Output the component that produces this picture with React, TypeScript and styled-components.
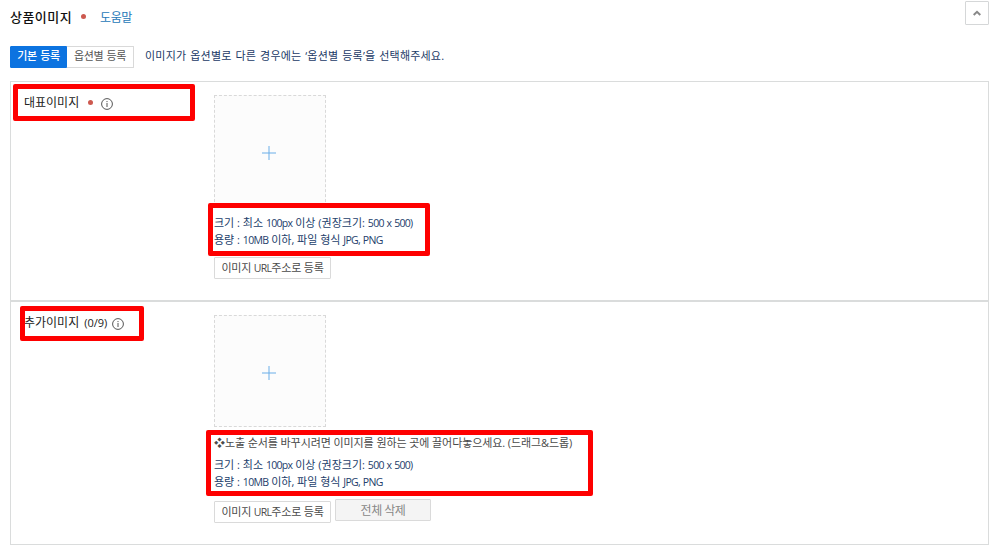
import styled, { createGlobalStyle } from 'styled-components';

const GlobalStyle = createGlobalStyle`
  * {
    box-sizing: border-box;
  }

  body {
    margin: 0;
    background: #fff;
    font-family: 'Open Sans', 'Noto Sans CJK KR', sans-serif;
    font-size: 11px;
    color: #333;
  }
`;

const Page = styled.div`
  display: flex;
  flex-direction: column;
  width: 1001px;
  height: 551px;
  padding: 1px 12px 0 10px;
  overflow: hidden;
`;

const Header = styled.header`
  display: flex;
  align-items: flex-start;
  height: 45px;
`;

const Title = styled.h1`
  margin: 6px 0 0;
  font-size: 13px;
  font-weight: 500;
  line-height: 20px;
  letter-spacing: 0.45px;
  color: #111;
`;

const Dot = styled.span<{ size: number }>`
  width: ${props => props.size}px;
  height: ${props => props.size}px;
  border-radius: 50%;
  background: #cd594f;
  flex-shrink: 0;
`;

const TitleDot = styled(Dot)`
  margin: 13px 14px 0 9px;
`;

const HelpLink = styled.a`
  margin-top: 7px;
  font-size: 12px;
  line-height: 20px;
  letter-spacing: -0.4px;
  color: #2678b8;
`;

const CollapseButton = styled.button`
  display: flex;
  align-items: center;
  justify-content: center;
  width: 24px;
  height: 24px;
  margin-left: auto;
  padding: 0;
  border: 1px solid #d5d7d8;
  border-radius: 1px;
  background: #fff;
`;

const Toolbar = styled.div`
  display: flex;
  align-items: center;
  height: 22px;
  margin-bottom: 13px;
`;

const Toggle = styled.button<{ active?: boolean; width: number }>`
  width: ${props => props.width}px;
  height: 22px;
  padding: 0 0 2px;
  border: 1px solid ${props => (props.active ? '#0c73e0' : '#d9d9d9')};
  border-left-width: ${props => (props.active ? 1 : 0)}px;
  border-radius: ${props => (props.active ? '1px 0 0 1px' : '0 1px 1px 0')};
  background: ${props => (props.active ? '#0c73e0' : '#fff')};
  color: ${props => (props.active ? '#fff' : '#555')};
  font-family: inherit;
  font-size: 11px;
  font-weight: ${props => (props.active ? 500 : 400)};
  line-height: 18px;
  letter-spacing: -0.4px;
  word-spacing: 1px;
  white-space: nowrap;
`;

const ToolbarNote = styled.p`
  margin: 0 0 2px 11px;
  font-size: 11px;
  line-height: 18px;
  letter-spacing: 0.2px;
  word-spacing: 0.9px;
  color: #1b3a66;
  white-space: nowrap;
`;

const Section = styled.section<{ height: number }>`
  display: flex;
  height: ${props => props.height}px;
  padding: 13px 0 0 13px;
  border: 1px solid #dadcdc;
`;

const Label = styled.div`
  display: flex;
  align-items: flex-start;
  width: 190px;
  font-size: 12px;
  line-height: 16px;
  color: #222;
  white-space: pre;
`;

const LabelDot = styled(Dot)`
  margin: 5px 8px 0 9px;
`;

const InfoSvg = styled.svg`
  margin-top: 3px;
  flex-shrink: 0;
`;

const CountInfo = styled.span`
  margin: 0 5px 0 5px;
  font-size: 11px;
`;

const Content = styled.div`
  display: flex;
  flex-direction: column;
  align-items: flex-start;
`;

const DropZone = styled.div`
  display: flex;
  align-items: center;
  justify-content: center;
  width: 112px;
  height: 112px;
  padding: 3px 2px 0 0;
  border: 1px dashed #d9d9d9;
  background: #fcfcfc;
`;

const Guide = styled.p<{ gap: number }>`
  margin: ${props => props.gap}px 0 0;
  font-size: 11px;
  line-height: 17px;
  color: #23406b;
  white-space: nowrap;
`;

const Latin = styled.span`
  font-size: 10.5px;
  line-height: 1;
  letter-spacing: -0.7px;
  word-spacing: 0.8px;
`;

const SortNote = styled.p`
  margin: 7px 0 0;
  font-size: 11px;
  line-height: 17px;
  letter-spacing: -0.09px;
  color: #4a4a4a;
  white-space: nowrap;
`;

const Actions = styled.div<{ gap: number }>`
  display: flex;
  align-items: flex-end;
  gap: 4px;
  margin-top: ${props => props.gap}px;
`;

const ActionButton = styled.button<{ width: number; muted?: boolean }>`
  width: ${props => props.width}px;
  height: 22px;
  margin-bottom: ${props => (props.muted ? 2 : 0)}px;
  padding: ${props => (props.muted ? '2px 0 0' : '0 0 1px')};
  border: 1px solid #dadada;
  border-radius: 1px;
  background: ${props => (props.muted ? '#f4f4f4' : '#fff')};
  color: ${props => (props.muted ? '#888' : '#4a4a4a')};
  font-family: inherit;
  font-size: ${props => (props.muted ? 12 : 11)}px;
  line-height: 18px;
  letter-spacing: ${props => (props.muted ? -0.5 : -0.2)}px;
  white-space: nowrap;
`;

// Red marker frames lie over the form
const Marker = styled.div<{ x: number; y: number; w: number; h: number }>`
  position: absolute;
  left: ${props => props.x}px;
  top: ${props => props.y}px;
  width: ${props => props.w}px;
  height: ${props => props.h}px;
  border: 5px solid #fe0000;
  border-radius: 2px;
  pointer-events: none;
`;

const markers = [
  { x: 13, y: 84, w: 182, h: 37 },
  { x: 208, y: 203, w: 222, h: 53 },
  { x: 20, y: 306, w: 124, h: 35 },
  { x: 206, y: 430, w: 387, h: 66 },
];

const InfoIcon = () => (
  <InfoSvg width="12" height="12" viewBox="0 0 12 12" fill="none" stroke="#555">
    <circle cx="6" cy="6" r="5.4" />
    <path d="M6 5v4" />
    <path d="M6 3v1.1" />
  </InfoSvg>
);

const PlusSvg = styled.svg`
  fill: none;
  stroke: #6aaee8;
  stroke-width: 1px;
`;

const PlusIcon = () => (
  <PlusSvg width="14" height="14" viewBox="0 0 14 14">
    <path d="M0 7h14M7 0v14" />
  </PlusSvg>
);

const SizeGuide = ({ gap }: { gap: number }) => (
  <Guide gap={gap}>
    크기 : 최소 <Latin>100px</Latin> 이상 (권장크기: <Latin>500 x 500)</Latin>
    <br />
    용량 : <Latin>10MB</Latin> 이하, 파일 형식 <Latin>JPG, PNG</Latin>
  </Guide>
);

const UrlButton = () => (
  <ActionButton width={117}>
    이미지 <Latin>URL</Latin>주소로 등록
  </ActionButton>
);

function App() {
  return (
    <>
      <GlobalStyle />
      <Page>
        <Header>
          <Title>상품이미지</Title>
          <TitleDot size={5} />
          <HelpLink>도움말</HelpLink>
          <CollapseButton>
            <svg width="8" height="6" viewBox="0 0 8 6" fill="none" stroke="#888" strokeWidth="2">
              <path d="M0.7 5L4 1.8L7.3 5" />
            </svg>
          </CollapseButton>
        </Header>
        <Toolbar>
          <Toggle active width={57}>기본 등록</Toggle>
          <Toggle width={67}>옵션별 등록</Toggle>
          <ToolbarNote>이미지가 옵션별로 다른 경우에는 ‘옵션별 등록’을 선택해주세요.</ToolbarNote>
        </Toolbar>
        <Section height={220}>
          <Label>
            대표이미지
            <LabelDot size={5} />
            <InfoIcon />
          </Label>
          <Content>
            <DropZone>
              <PlusIcon />
            </DropZone>
            <SizeGuide gap={7} />
            <Actions gap={9}>
              <UrlButton />
            </Actions>
          </Content>
        </Section>
        <Section height={244}>
          <Label>
            추가이미지
            <CountInfo>(0/9)</CountInfo>
            <InfoIcon />
          </Label>
          <Content>
            <DropZone>
              <PlusIcon />
            </DropZone>
            <SortNote>❖노출 순서를 바꾸시려면 이미지를 원하는 곳에 끌어다놓으세요. (드래그&드롭)</SortNote>
            <SizeGuide gap={5} />
            <Actions gap={9}>
              <UrlButton />
              <ActionButton muted width={96}>전체 삭제</ActionButton>
            </Actions>
          </Content>
        </Section>
      </Page>
      {markers.map(marker => (
        <Marker key={`${marker.x}-${marker.y}`} {...marker} />
      ))}
    </>
  );
}

export default App;
